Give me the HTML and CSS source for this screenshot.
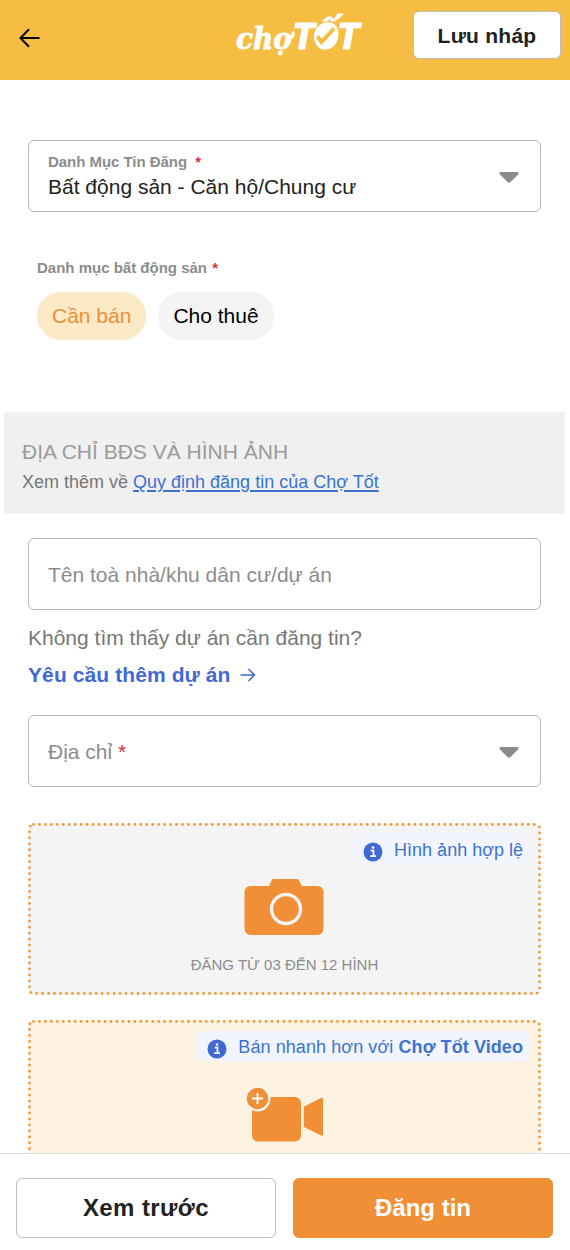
FILE: index.html
```html
<!DOCTYPE html>
<html lang="vi">
<head>
<meta charset="utf-8">
<title>Chợ Tốt - Đăng tin</title>
<link rel="stylesheet" href="styles.css">
</head>
<body>
<div class="page">
  <header class="header">
    <svg class="back" width="22" height="20" viewBox="0 0 22 20"><path d="M20.500 10H2M10 1.200L1.500 10L10 18.800" fill="none" stroke="#000" stroke-width="2"/></svg>
    <svg class="logo" width="134" height="60" viewBox="0 0 134 60">
      <text class="logo-cho" x="3" y="45" textLength="56" lengthAdjust="spacingAndGlyphs">chợ</text>
      <text class="logo-tot" x="59.500" y="45" textLength="67" lengthAdjust="spacingAndGlyphs">TỐT</text>
      <ellipse cx="93" cy="32" rx="12" ry="13.500" fill="#fff" transform="rotate(12 93 32)"/>
      <path d="M84.500 32.500L88.500 38L101 24.500" fill="none" stroke="#f5bd42" stroke-width="4"/>
    </svg>
    <button class="btn draft">Lưu nháp</button>
  </header>

  <main class="content">
    <section class="group">
      <div class="field select">
        <div class="field-text">
          <div class="mini-label cat-label">Danh Mục Tin Đăng <span class="req">*</span></div>
          <div class="value">Bất động sản - Căn hộ/Chung cư</div>
        </div>
        <svg class="caret" width="20" height="12" viewBox="0 0 20 12"><path d="M1.500 0H18.500Q20.500 1 19 2.600L11.500 10Q10 11.500 8.500 10L1 2.600Q-.5 1 1.500 0Z" fill="#8c8c8c"/></svg>
      </div>
      <div class="kind">
        <div class="mini-label kind-label">Danh mục bất động sản <span class="req">*</span></div>
        <div class="chips"><span class="chip active">Cần bán</span><span class="chip">Cho thuê</span></div>
      </div>
    </section>

    <section class="section-head">
      <h2>ĐỊA CHỈ BĐS VÀ HÌNH ẢNH</h2>
      <p>Xem thêm về <a href="#">Quy định đăng tin của Chợ Tốt</a></p>
    </section>

    <section class="group">
      <div class="field"><span class="placeholder project">Tên toà nhà/khu dân cư/dự án</span></div>
      <p class="hint">Không tìm thấy dự án cần đăng tin?</p>
      <a class="request"><span>Yêu cầu thêm dự án</span><svg width="16" height="16" viewBox="0 0 16 16"><path d="M0.500 8H14.500M8.500 2L14.500 8L8.500 14" fill="none" stroke="#4169d4" stroke-width="1.500"/></svg></a>
      <div class="field select address">
        <span class="placeholder">Địa chỉ <span class="req">*</span></span>
        <svg class="caret" width="20" height="12" viewBox="0 0 20 12"><path d="M1.500 0H18.500Q20.500 1 19 2.600L11.500 10Q10 11.500 8.500 10L1 2.600Q-.5 1 1.500 0Z" fill="#8c8c8c"/></svg>
      </div>

      <div class="upload">
        <svg class="dots" width="513" height="172"><rect x="1.500" y="1.500" width="510" height="169" rx="4"/></svg>
        <div class="info"><svg width="20" height="20" viewBox="0 0 20 20"><circle cx="10" cy="10" r="9.500" fill="#4169d4"/><path d="M7.700 8.700H10.500V14M7.200 14.200H13" fill="none" stroke="#fff" stroke-width="1.700"/><circle cx="10" cy="5.600" r="1.300" fill="#fff"/></svg><span class="info-photo">Hình ảnh hợp lệ</span></div>
        <svg class="camera" width="80" height="57" viewBox="0 0 80 57"><path d="M7 7H25L28 0.800Q28.500 0 29.500 0H53Q54 0 54.500 0.800L58 7H73Q79.500 7 79.500 13.500V49.500Q79.500 56 73 56H7Q.5 56 .5 49.500V13.500Q.5 7 7 7Z" fill="#f08f36"/><circle cx="42" cy="30" r="14.500" fill="none" stroke="#f4f4f4" stroke-width="3.400"/></svg>
        <div class="caption">ĐĂNG TỪ 03 ĐẾN 12 HÌNH</div>
      </div>

      <div class="upload video">
        <svg class="dots" width="513" height="220"><rect x="1.500" y="1.500" width="510" height="217" rx="4"/></svg>
        <div class="info"><svg width="20" height="20" viewBox="0 0 20 20"><circle cx="10" cy="10" r="9.500" fill="#4169d4"/><path d="M7.700 8.700H10.500V14M7.200 14.200H13" fill="none" stroke="#fff" stroke-width="1.700"/><circle cx="10" cy="5.600" r="1.300" fill="#fff"/></svg><span class="info-video">Bán nhanh hơn với <b>Chợ Tốt Video</b></span></div>
        <svg class="camcorder" width="80" height="56" viewBox="0 0 80 56"><rect x="7" y="11" width="49" height="44.500" rx="6" fill="#f08f36"/><path d="M58.800 22Q58.800 20.700 60 20L76 12Q78 11 78 13V48.500Q78 50.500 76 49.500L60 41.500Q58.800 41 58.800 40Z" fill="#f08f36"/><circle cx="12.700" cy="12.700" r="12.700" fill="#f3f4f6"/><circle cx="12.500" cy="12.500" r="10.700" fill="#f08f36"/><path d="M7 12.500H18M12.500 7V18" stroke="#fff" stroke-width="1.900"/></svg>
      </div>
    </section>
  </main>

  <footer class="actions">
    <button class="btn preview"><span>Xem trước</span></button>
    <button class="btn submit"><span>Đăng tin</span></button>
  </footer>
</div>
</body>
</html>
```

FILE: styles.css
```css
* { box-sizing: border-box; }
body { margin: 0; background: #fff; font-family: "Liberation Sans", Arial, sans-serif; }
h2, p { margin: 0; font-weight: 400; }
svg { display: block; flex: none; }
.page { width: 570px; height: 1250px; display: flex; flex-direction: column; overflow: hidden; }
.header { height: 80px; flex: none; background: #f5bd42; display: grid; grid-template-columns: 233px 1fr 148px; align-items: start; padding-right: 9px; }
.back { margin: 28px 0 0 19px; }
.logo { margin-top: 4px; overflow: visible; fill: #fff; }
.logo-cho { font: italic 700 30px "DejaVu Serif", serif; stroke: #fff; stroke-width: .8px; }
.logo-tot { font: italic 900 36px Roboto, sans-serif; stroke: #fff; stroke-width: .8px; }
.btn { font-family: inherit; font-weight: 700; color: #222; background: #fff; border: 1px solid #bdbdbd; border-radius: 6px; padding: 0; }
.draft { width: 148px; height: 48px; margin-top: 11px; padding-top: 1px; font-size: 21px; letter-spacing: .25px; }
.content { flex: 1; min-height: 0; overflow: hidden; padding-top: 60px; }
.group { padding: 0 29px 0 28px; }
.field { height: 72px; border: 1px solid #b8b8b8; border-radius: 6px; padding: 0 21px 0 19px; display: flex; align-items: center; justify-content: space-between; }
.field-text { padding-bottom: 1px; }
.mini-label { font-size: 15px; line-height: 18px; font-weight: 700; color: #8c8c8c; white-space: nowrap; }
.req { color: #d72e3d; }
.cat-label { letter-spacing: -.04px; }
.cat-label .req { margin-left: 4px; }
.kind-label .req { margin-left: 1px; }
.value { font-size: 21px; line-height: 28px; padding-top: 2px; margin-bottom: -2px; color: #222; white-space: nowrap; }
.caret { margin-top: 3px; }
.kind { margin: 47px 0 0 9px; }
.chips { display: flex; gap: 12px; margin-top: 15px; }
.chip { height: 48px; line-height: 48px; border-radius: 24px; padding: 0 15px; font-size: 21px; background: #f4f4f4; color: #000; white-space: nowrap; }
.chip.active { background: #fce9c6; color: #f08f36; }
.section-head { height: 102px; margin: 72px 5px 24px 4px; background: #f0f0f0; padding: 25px 18px 0; white-space: nowrap; }
.section-head h2 { font-size: 21px; line-height: 30px; color: #9b9b9b; }
.section-head p { font-size: 18px; line-height: 30px; color: #777; }
.section-head a { color: #3b73d1; text-decoration-thickness: 1.500px; text-underline-offset: 2px; }
.placeholder { font-size: 21px; color: #8c8c8c; white-space: nowrap; padding-top: 2px; }
.hint { font-size: 21px; line-height: 30px; color: #777; margin-top: 13px; white-space: nowrap; }
.request { display: flex; align-items: center; gap: 9px; margin-top: 7px; font-size: 21px; line-height: 30px; font-weight: 700; color: #4169d4; white-space: nowrap; }
.request span { letter-spacing: .1px; }
.address { margin-top: 25px; }
.upload { position: relative; height: 172px; margin-top: 36px; background: #f4f4f4; border-radius: 6px; display: flex; flex-direction: column; align-items: center; padding: 11px 12px 0; }
.dots { position: absolute; inset: 0; }
.dots rect { fill: none; stroke: #f09a38; stroke-width: 2.800px; stroke-linecap: round; stroke-dasharray: 0 5.960; }
.info { align-self: flex-end; height: 30px; display: flex; align-items: center; gap: 11px; padding: 0 6px 0 11px; background: #f2f5fd; border-radius: 5px; font-size: 18px; line-height: 24px; color: #3b73d1; white-space: nowrap; }
.info svg { margin-top: 6px; }
.info span { padding-top: 1px; }
.info-video { letter-spacing: .08px; }
.camera { margin: 15px 1px 0 0; }
.caption { font-size: 15px; line-height: 20px; margin-top: 19px; color: #8c8c8c; white-space: nowrap; }
.upload.video { margin-top: 25px; height: 220px; background: #fdf3e0; }
.camcorder { margin-top: 25px; margin-right: -1px; }
.actions { height: 97px; flex: none; border-top: 1px solid #ddd; padding: 24px 17px 12px 16px; display: grid; grid-template-columns: 260px 260px; gap: 17px; }
.actions .btn { height: 60px; font-size: 24px; }
.preview { letter-spacing: .4px; }
.actions .submit { background: #f08f36; border-color: #f08f36; color: #fff; }
```
